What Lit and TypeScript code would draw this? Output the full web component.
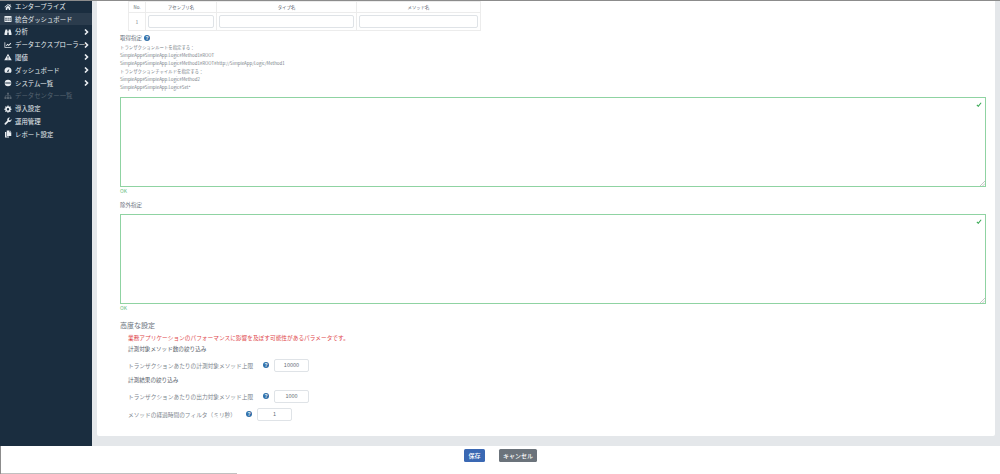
import { LitElement, html, css, svg } from "lit";
import { customElement } from "lit/decorators.js";

const icons: Record<string, unknown> = {
  home: svg`<path d="M8 2 1 8l1 1 6-5 6 5 1-1-2-2V2.500h-2v1.800zM3.500 9.500 8 5.700l4.500 3.800V14H9.500v-3h-3v3h-3z"/>`,
  table: svg`<path d="M1 2h14v12H1zM2.500 5.500v2h3v-2zm4.500 0v2h2.500v-2zm4 0v2h2.500v-2zM2.500 9v2.500h3V9zM7 9v2.500h2.500V9zm4 0v2.500h2.500V9z"/>`,
  binoculars: svg`<path d="M3 3h3.500v2H7v2h2V5h.500V3H13l2 8v3H9.500V9h-3v5H1v-3z"/>`,
  chart: svg`<path d="M1 2.500h1.500v9.500H15v1.500H1zM4 9l3-3.500 2.500 2L13 3.500l1.500 1.500-5 5L7 8l-2 2.500z"/>`,
  warn: svg`<path d="M8 1.500 15.500 14.500H.5zM7.100 6v4.500h1.800V6zm0 5.500v1.700h1.800v-1.700z"/>`,
  gauge: svg`<path d="M8 2.500a7 7 0 0 1 7 7 6.500 6.500 0 0 1-1.200 3.800H2.200A6.500 6.500 0 0 1 1 9.500a7 7 0 0 1 7-7zm2.800 3L7.600 9A1.500 1.500 0 1 0 9.200 10.300z"/>`,
  globe: svg`<path d="M8 1.500a6.500 6.500 0 1 1 0 13 6.500 6.500 0 0 1 0-13zM2.500 6.800v1h11v-1zm0 2.400v1h11v-1z"/>`,
  sitemap: svg`<path d="M6 1.500h4v3.500H8.600v2H13.500v2.500h1.500V14h-4V9.500h1.500V8.200H8.600v1.300H10V14H6V9.500h1.400V8.200H3.500v1.300H5V14H1V9.500h1.500V7h4.900V5H6z"/>`,
  cog: svg`<path d="M7 1h2l.4 1.900 1.400.6 1.700-1 1.400 1.400-1 1.700.6 1.400L15 7.400v2l-1.900.4-.6 1.400 1 1.700-1.400 1.400-1.700-1-1.400.6L9 15.500H7l-.4-1.900-1.400-.6-1.700 1-1.400-1.400 1-1.700-.6-1.400L.6 9.400v-2l1.900-.4.6-1.400-1-1.700L3.500 2.500l1.700 1 1.400-.6zM8 6a2.400 2.400 0 1 0 0 4.800A2.400 2.400 0 0 0 8 6z"/>`,
  wrench: svg`<path d="M14.800 4.200a4.200 4.200 0 0 1-5.500 5.300L4 14.800a1.600 1.600 0 0 1-2.500-2.400l5.300-5.300A4.200 4.200 0 0 1 12 1.500L9.500 4l.6 2.200 2.200.6z"/>`,
  copy: svg`<path d="M5.500 1H11v3.500h3.500V12h-9zM12 1.200 14.300 3.500H12zM2 4h2.500v9.200H10V15H2z"/>`,
};

const menu: { icon: string; label: string; arrow?: boolean; active?: boolean; disabled?: boolean }[] = [
  { icon: "home", label: "エンタープライズ" },
  { icon: "table", label: "統合ダッシュボード", active: true },
  { icon: "binoculars", label: "分析", arrow: true },
  { icon: "chart", label: "データエクスプローラー", arrow: true },
  { icon: "warn", label: "閾値", arrow: true },
  { icon: "gauge", label: "ダッシュボード", arrow: true },
  { icon: "globe", label: "システム一覧", arrow: true },
  { icon: "sitemap", label: "データセンター一覧", disabled: true },
  { icon: "cog", label: "導入設定" },
  { icon: "wrench", label: "運用管理" },
  { icon: "copy", label: "レポート設定" },
];

const helpLines = [
  "トランザクションルートを指定する：",
  "SimpleApp#SimpleApp.Logic#Method1#ROOT",
  "SimpleApp#SimpleApp.Logic#Method1#ROOT#http://SimpleApp/Logic/Method1",
  "トランザクションチャイルドを指定する：",
  "SimpleApp#SimpleApp.Logic#Method2",
  "SimpleApp#SimpleApp.Logic#Set*",
];

@customElement("app-root")
export class AppRoot extends LitElement {
  static styles = css`
    :host {
      display: flex;
      flex-direction: column;
      width: 1000px;
      height: 474px;
      overflow: hidden;
      background: #fff;
      font-family: "Noto Sans CJK JP", "Noto Sans", sans-serif;
      color: #6b7480;
      border-top: 1px solid #8c8c8c;
      box-sizing: border-box;
    }
    .main { display: flex; height: 445px; flex: none; }
    .side { width: 92px; flex: none; background: #1a2d3f; box-sizing: border-box; }
    .item {
      display: flex; align-items: center; height: 12.8px; padding: 0 3px 0 4px;
      color: #e9edf1; font-size: 6.4px; white-space: nowrap; box-sizing: border-box;
    }
    .item:first-child { height: 11.7px; }
    .item.active { background: #2b3c4d; }
    .item.disabled { color: #56636f; }
    .icon { width: 8px; height: 8px; flex: none; margin-right: 3px; fill: currentColor; }
    .item span { flex: 1; min-width: 0; }
    .arrow { width: 5px; height: 6px; flex: none; fill: none; stroke: #e9edf1; stroke-width: 1.6; }
    .wrap { flex: 1; background: #e4e7ea; padding: 0 5px 10px; min-width: 0; display: flex; }
    .card {
      flex: 1; background: #fff; border-radius: 0 0 2px 2px; box-sizing: border-box;
      padding: 0 9px 0 23px; min-width: 0; display: flex; flex-direction: column;
    }
    table { border-collapse: collapse; margin-left: 8px; width: 352px; table-layout: fixed; }
    td, th { border: 1px solid #ececec; padding: 0; text-align: center; font-weight: 400; font-size: 4.4px; color: #56606a; }
    th { height: 10px; }
    td { height: 17px; color: #7a828a; font-size: 5px; }
    .cell { display: block; height: 13px; margin: 0 2px; border: 1px solid #dfe3e7; border-radius: 2px; box-sizing: border-box; }
    .lbl { font-size: 5.5px; line-height: 10px; color: #6b7480; display: flex; align-items: center; gap: 2px; }
    .lbl.first { margin-top: 2px; }
    .lbl.second { margin-top: 6px; }
    .q { width: 6px; height: 6px; border-radius: 50%; background: #2f6ea8; color: #fff; font-size: 5px; font-weight: 700; line-height: 6px; text-align: center; flex: none; font-family: "Liberation Sans", sans-serif; }
    .help { display: flex; flex-direction: column; }
    .help div { font-size: 4.4px; line-height: 8.1px; color: #757d85; white-space: nowrap; }
    .ta { position: relative; height: 90px; border: 1px solid #8fd3a2; box-sizing: border-box; margin-top: 5px; }
    .ta.b { margin-top: 4px; }
    .check { position: absolute; right: 3px; top: 4px; width: 6px; height: 5px; fill: none; stroke: #35a852; stroke-width: 1.5; }
    .grip { position: absolute; right: 0; bottom: 0; width: 5px; height: 5px; stroke: #b8b8b8; stroke-width: .8; }
    .ok { font-size: 5px; line-height: 7px; color: #63bd7c; }
    .h { font-size: 7px; line-height: 10px; margin-top: 9px; color: #69727b; }
    .adv { padding-left: 8px; display: flex; flex-direction: column; }
    .red { font-size: 5.7px; line-height: 10px; margin-top: 3px; color: #e0484c; white-space: nowrap; }
    .sub { font-size: 5.6px; line-height: 9px; color: #59626b; margin-top: 2px; white-space: nowrap; }
    .sub.two { margin-top: 4px; }
    .row { display: flex; align-items: center; height: 13px; font-size: 5.7px; color: #7d858d; margin-top: 5px; white-space: nowrap; }
    .row .t { width: 135px; }
    .row.r3 .t { width: 118px; }
    .row .q { margin-right: 5px; }
    .num { width: 35px; height: 13px; border: 1px solid #dfe3e7; border-radius: 2px; box-sizing: border-box; font-size: 5.500px; color: #666e76; display: flex; align-items: center; justify-content: center; }
    .foot { flex: 1; position: relative; display: flex; justify-content: center; gap: 14px; padding: 3px 0 0 0; box-sizing: border-box; border-left: 1px solid #8c8c8c; }
    .btn { height: 13px; border-radius: 1.500px; color: #fff; font-size: 6px; font-weight: 500; display: flex; align-items: center; justify-content: center; box-sizing: border-box; }
    .save { width: 21px; background: #3a68b3; }
    .cancel { width: 38px; background: #6b737b; }
    .line { position: absolute; left: 0; bottom: 0; width: 236px; height: 1px; background: #c0c0c0; }
  `;

  private row(label: string, value: string, cls = "") {
    return html`<div class="row ${cls}"><div class="t">${label}</div><div class="q">?</div><div class="num">${value}</div></div>`;
  }

  private textarea(cls = "") {
    return html`<div class="ta ${cls}">
      <svg class="check" viewBox="0 0 8 7"><path d="M1 4 3 6 7 1"/></svg>
      <svg class="grip" viewBox="0 0 5 5"><path d="M0 5 5 0M2.500 5 5 2.500"/></svg>
    </div>`;
  }

  render() {
    return html`
      <div class="main">
        <nav class="side">
          ${menu.map(
            (m) => html`<div class="item ${m.active ? "active" : ""} ${m.disabled ? "disabled" : ""}">
              <svg class="icon" viewBox="0 0 16 16">${icons[m.icon]}</svg>
              <span>${m.label}</span>
              ${m.arrow ? html`<svg class="arrow" viewBox="0 0 5 6"><path d="M1 .5 3.500 3 1 5.500"/></svg>` : null}
            </div>`
          )}
        </nav>
        <div class="wrap">
          <section class="card">
            <table>
              <colgroup><col style="width:17px" /><col style="width:71px" /><col style="width:140px" /><col style="width:124px" /></colgroup>
              <tr><th>No.</th><th>アセンブリ名</th><th>タイプ名</th><th>メソッド名</th></tr>
              <tr><td>1</td><td><span class="cell"></span></td><td><span class="cell"></span></td><td><span class="cell"></span></td></tr>
            </table>
            <div class="lbl first">取得指定 <div class="q">?</div></div>
            <div class="help">${helpLines.map((l) => html`<div>${l}</div>`)}</div>
            ${this.textarea()}
            <div class="ok">OK</div>
            <div class="lbl second">除外指定</div>
            ${this.textarea("b")}
            <div class="ok">OK</div>
            <div class="h">高度な設定</div>
            <div class="adv">
              <div class="red">業務アプリケーションのパフォーマンスに影響を及ぼす可能性があるパラメータです。</div>
              <div class="sub">計測対象メソッド数の絞り込み</div>
              ${this.row("トランザクションあたりの計測対象メソッド上限", "10000")}
              <div class="sub two">計測結果の絞り込み</div>
              ${this.row("トランザクションあたりの出力対象メソッド上限", "1000")}
              ${this.row("メソッドの経過時間のフィルタ（ミリ秒）", "1", "r3")}
            </div>
          </section>
        </div>
      </div>
      <footer class="foot">
        <div class="btn save">保存</div>
        <div class="btn cancel">キャンセル</div>
        <div class="line"></div>
      </footer>
    `;
  }
}
